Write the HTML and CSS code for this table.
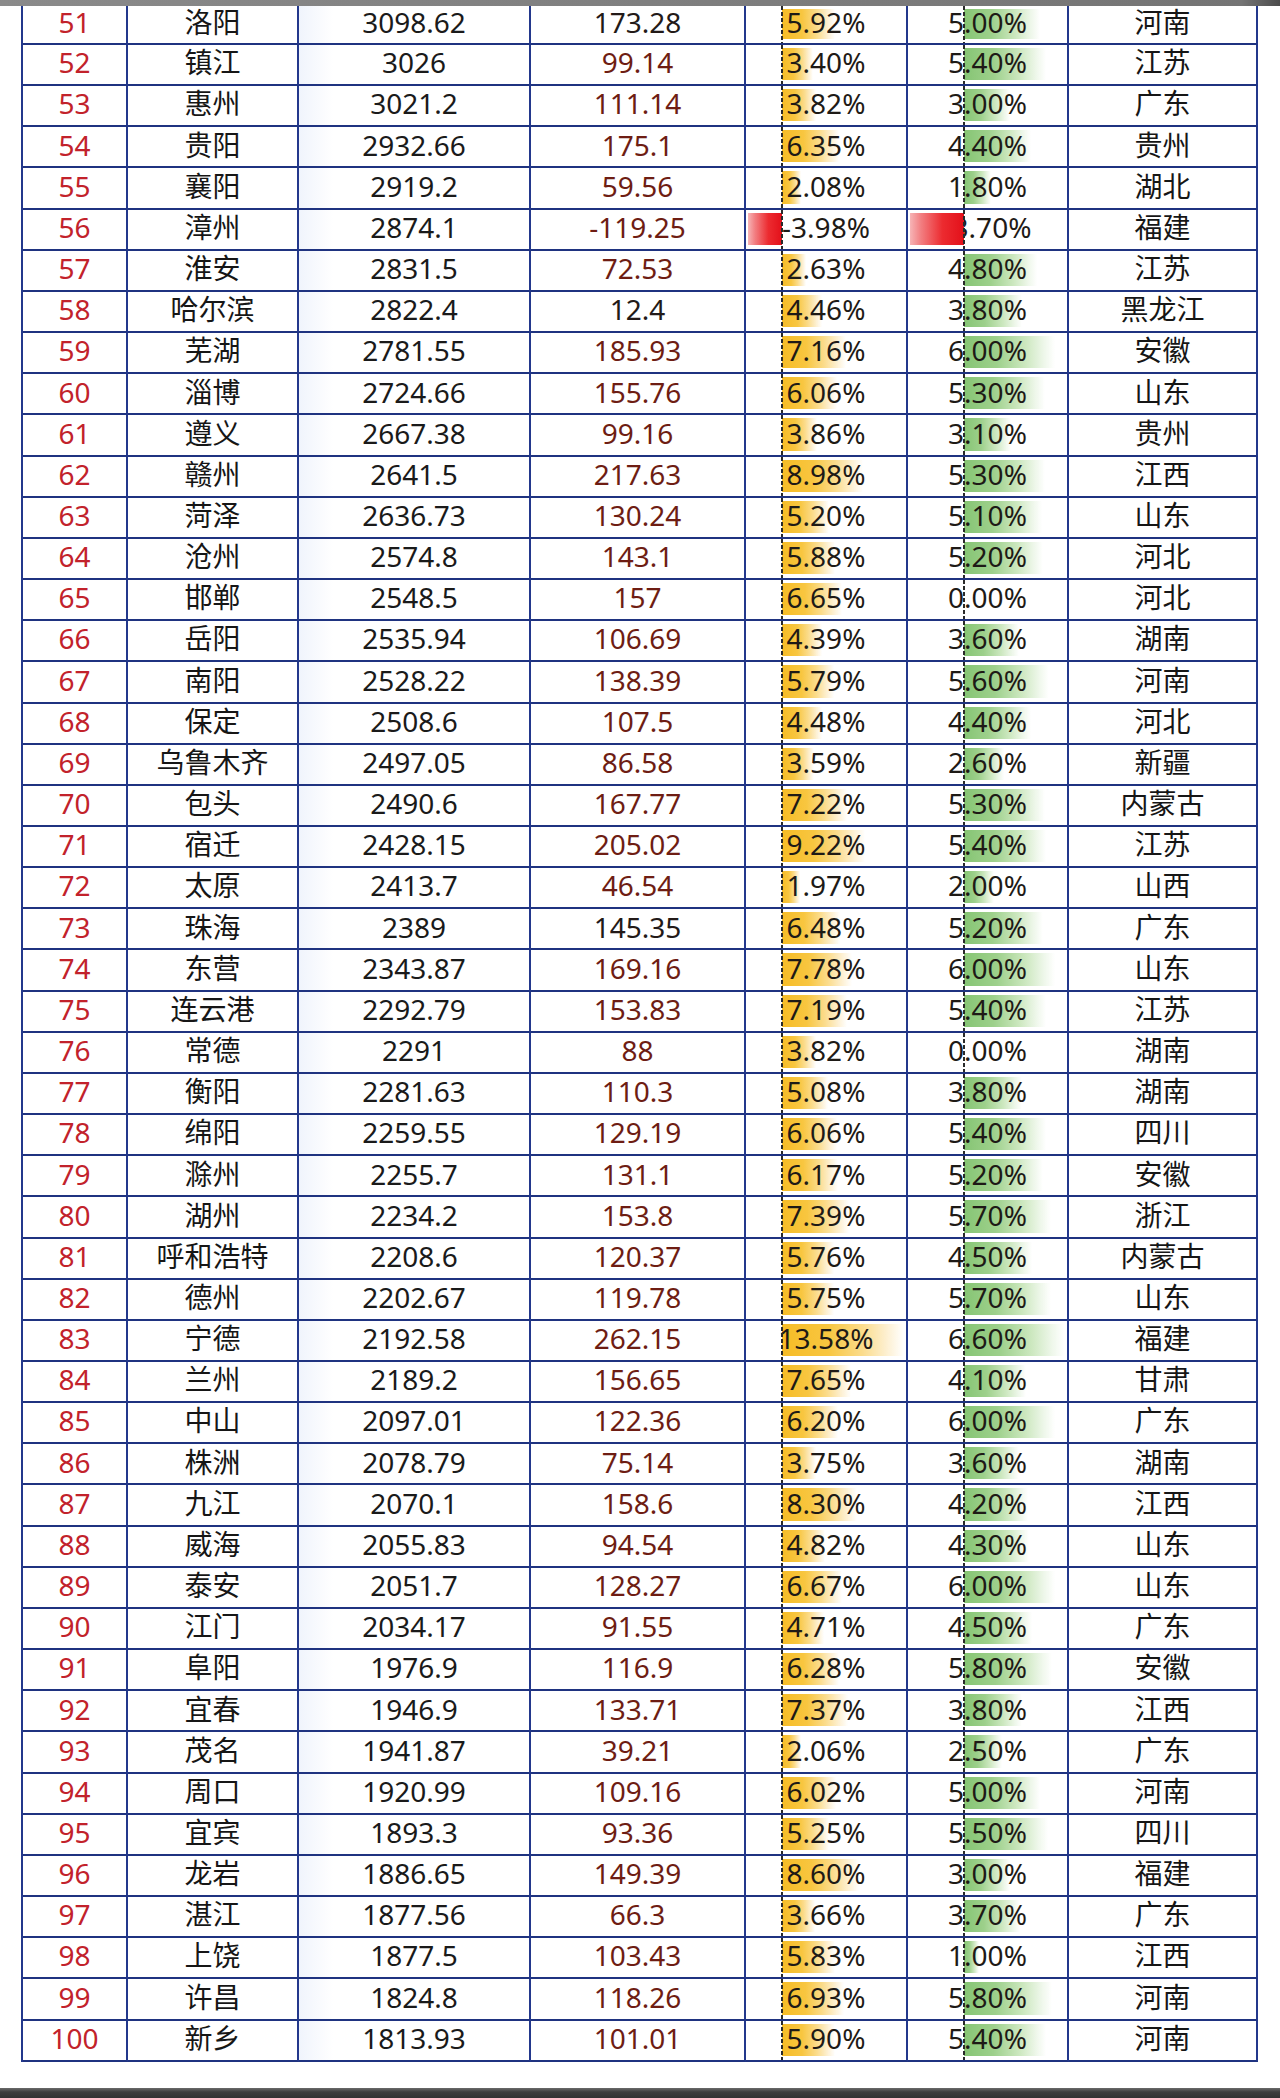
FILE: index.html
```html
<!DOCTYPE html>
<html lang="zh-CN">
<head>
<meta charset="utf-8">
<title>城市GDP排名 51-100</title>
<link rel="stylesheet" href="styles.css">
</head>
<body>
<div class="topbar"></div>
<div class="sheet">
<div class="row"><div class="c idx">51</div><div class="c city">洛阳</div><div class="c gdp">3098.62</div><div class="c inc dark">173.28</div><div class="c pct p5"><span class="bar pos" style="width:53.3px"></span><span class="v">5.92%</span><span class="axis"></span></div><div class="c pct p6"><span class="bar pos" style="width:76px"></span><span class="v">5.00%</span><span class="axis"></span></div><div class="c prov">河南</div></div>
<div class="row"><div class="c idx">52</div><div class="c city">镇江</div><div class="c gdp">3026</div><div class="c inc">99.14</div><div class="c pct p5"><span class="bar pos" style="width:30.6px"></span><span class="v">3.40%</span><span class="axis"></span></div><div class="c pct p6"><span class="bar pos" style="width:82.1px"></span><span class="v">5.40%</span><span class="axis"></span></div><div class="c prov">江苏</div></div>
<div class="row"><div class="c idx">53</div><div class="c city">惠州</div><div class="c gdp">3021.2</div><div class="c inc">111.14</div><div class="c pct p5"><span class="bar pos" style="width:34.4px"></span><span class="v">3.82%</span><span class="axis"></span></div><div class="c pct p6"><span class="bar pos" style="width:45.6px"></span><span class="v">3.00%</span><span class="axis"></span></div><div class="c prov">广东</div></div>
<div class="row"><div class="c idx">54</div><div class="c city">贵阳</div><div class="c gdp">2932.66</div><div class="c inc">175.1</div><div class="c pct p5"><span class="bar pos" style="width:57.2px"></span><span class="v">6.35%</span><span class="axis"></span></div><div class="c pct p6"><span class="bar pos" style="width:66.9px"></span><span class="v">4.40%</span><span class="axis"></span></div><div class="c prov">贵州</div></div>
<div class="row"><div class="c idx">55</div><div class="c city">襄阳</div><div class="c gdp">2919.2</div><div class="c inc">59.56</div><div class="c pct p5"><span class="bar pos" style="width:18.7px"></span><span class="v">2.08%</span><span class="axis"></span></div><div class="c pct p6"><span class="bar pos" style="width:27.4px"></span><span class="v">1.80%</span><span class="axis"></span></div><div class="c prov">湖北</div></div>
<div class="row"><div class="c idx">56</div><div class="c city">漳州</div><div class="c gdp">2874.1</div><div class="c inc">-119.25</div><div class="c pct p5"><span class="bar neg" style="width:34px"></span><span class="v">-3.98%</span><span class="axis"></span></div><div class="c pct p6"><span class="bar neg" style="width:54px"></span><span class="v">-3.70%</span><span class="axis"></span></div><div class="c prov">福建</div></div>
<div class="row"><div class="c idx">57</div><div class="c city">淮安</div><div class="c gdp">2831.5</div><div class="c inc">72.53</div><div class="c pct p5"><span class="bar pos" style="width:23.7px"></span><span class="v">2.63%</span><span class="axis"></span></div><div class="c pct p6"><span class="bar pos" style="width:73px"></span><span class="v">4.80%</span><span class="axis"></span></div><div class="c prov">江苏</div></div>
<div class="row"><div class="c idx">58</div><div class="c city">哈尔滨</div><div class="c gdp">2822.4</div><div class="c inc dark">12.4</div><div class="c pct p5"><span class="bar pos" style="width:40.1px"></span><span class="v">4.46%</span><span class="axis"></span></div><div class="c pct p6"><span class="bar pos" style="width:57.8px"></span><span class="v">3.80%</span><span class="axis"></span></div><div class="c prov">黑龙江</div></div>
<div class="row"><div class="c idx">59</div><div class="c city">芜湖</div><div class="c gdp">2781.55</div><div class="c inc">185.93</div><div class="c pct p5"><span class="bar pos" style="width:64.4px"></span><span class="v">7.16%</span><span class="axis"></span></div><div class="c pct p6"><span class="bar pos" style="width:91.2px"></span><span class="v">6.00%</span><span class="axis"></span></div><div class="c prov">安徽</div></div>
<div class="row"><div class="c idx">60</div><div class="c city">淄博</div><div class="c gdp">2724.66</div><div class="c inc">155.76</div><div class="c pct p5"><span class="bar pos" style="width:54.5px"></span><span class="v">6.06%</span><span class="axis"></span></div><div class="c pct p6"><span class="bar pos" style="width:80.6px"></span><span class="v">5.30%</span><span class="axis"></span></div><div class="c prov">山东</div></div>
<div class="row"><div class="c idx">61</div><div class="c city">遵义</div><div class="c gdp">2667.38</div><div class="c inc">99.16</div><div class="c pct p5"><span class="bar pos" style="width:34.7px"></span><span class="v">3.86%</span><span class="axis"></span></div><div class="c pct p6"><span class="bar pos" style="width:47.1px"></span><span class="v">3.10%</span><span class="axis"></span></div><div class="c prov">贵州</div></div>
<div class="row"><div class="c idx">62</div><div class="c city">赣州</div><div class="c gdp">2641.5</div><div class="c inc">217.63</div><div class="c pct p5"><span class="bar pos" style="width:80.8px"></span><span class="v">8.98%</span><span class="axis"></span></div><div class="c pct p6"><span class="bar pos" style="width:80.6px"></span><span class="v">5.30%</span><span class="axis"></span></div><div class="c prov">江西</div></div>
<div class="row"><div class="c idx">63</div><div class="c city">菏泽</div><div class="c gdp">2636.73</div><div class="c inc">130.24</div><div class="c pct p5"><span class="bar pos" style="width:46.8px"></span><span class="v">5.20%</span><span class="axis"></span></div><div class="c pct p6"><span class="bar pos" style="width:77.5px"></span><span class="v">5.10%</span><span class="axis"></span></div><div class="c prov">山东</div></div>
<div class="row"><div class="c idx">64</div><div class="c city">沧州</div><div class="c gdp">2574.8</div><div class="c inc">143.1</div><div class="c pct p5"><span class="bar pos" style="width:52.9px"></span><span class="v">5.88%</span><span class="axis"></span></div><div class="c pct p6"><span class="bar pos" style="width:79px"></span><span class="v">5.20%</span><span class="axis"></span></div><div class="c prov">河北</div></div>
<div class="row"><div class="c idx">65</div><div class="c city">邯郸</div><div class="c gdp">2548.5</div><div class="c inc">157</div><div class="c pct p5"><span class="bar pos" style="width:59.9px"></span><span class="v">6.65%</span><span class="axis"></span></div><div class="c pct p6"><span class="v">0.00%</span><span class="axis"></span></div><div class="c prov">河北</div></div>
<div class="row"><div class="c idx">66</div><div class="c city">岳阳</div><div class="c gdp">2535.94</div><div class="c inc">106.69</div><div class="c pct p5"><span class="bar pos" style="width:39.5px"></span><span class="v">4.39%</span><span class="axis"></span></div><div class="c pct p6"><span class="bar pos" style="width:54.7px"></span><span class="v">3.60%</span><span class="axis"></span></div><div class="c prov">湖南</div></div>
<div class="row"><div class="c idx">67</div><div class="c city">南阳</div><div class="c gdp">2528.22</div><div class="c inc">138.39</div><div class="c pct p5"><span class="bar pos" style="width:52.1px"></span><span class="v">5.79%</span><span class="axis"></span></div><div class="c pct p6"><span class="bar pos" style="width:85.1px"></span><span class="v">5.60%</span><span class="axis"></span></div><div class="c prov">河南</div></div>
<div class="row"><div class="c idx">68</div><div class="c city">保定</div><div class="c gdp">2508.6</div><div class="c inc">107.5</div><div class="c pct p5"><span class="bar pos" style="width:40.3px"></span><span class="v">4.48%</span><span class="axis"></span></div><div class="c pct p6"><span class="bar pos" style="width:66.9px"></span><span class="v">4.40%</span><span class="axis"></span></div><div class="c prov">河北</div></div>
<div class="row"><div class="c idx">69</div><div class="c city">乌鲁木齐</div><div class="c gdp">2497.05</div><div class="c inc">86.58</div><div class="c pct p5"><span class="bar pos" style="width:32.3px"></span><span class="v">3.59%</span><span class="axis"></span></div><div class="c pct p6"><span class="bar pos" style="width:39.5px"></span><span class="v">2.60%</span><span class="axis"></span></div><div class="c prov">新疆</div></div>
<div class="row"><div class="c idx">70</div><div class="c city">包头</div><div class="c gdp">2490.6</div><div class="c inc">167.77</div><div class="c pct p5"><span class="bar pos" style="width:65px"></span><span class="v">7.22%</span><span class="axis"></span></div><div class="c pct p6"><span class="bar pos" style="width:80.6px"></span><span class="v">5.30%</span><span class="axis"></span></div><div class="c prov">内蒙古</div></div>
<div class="row"><div class="c idx">71</div><div class="c city">宿迁</div><div class="c gdp">2428.15</div><div class="c inc">205.02</div><div class="c pct p5"><span class="bar pos" style="width:83px"></span><span class="v">9.22%</span><span class="axis"></span></div><div class="c pct p6"><span class="bar pos" style="width:82.1px"></span><span class="v">5.40%</span><span class="axis"></span></div><div class="c prov">江苏</div></div>
<div class="row"><div class="c idx">72</div><div class="c city">太原</div><div class="c gdp">2413.7</div><div class="c inc">46.54</div><div class="c pct p5"><span class="bar pos" style="width:17.7px"></span><span class="v">1.97%</span><span class="axis"></span></div><div class="c pct p6"><span class="bar pos" style="width:30.4px"></span><span class="v">2.00%</span><span class="axis"></span></div><div class="c prov">山西</div></div>
<div class="row"><div class="c idx">73</div><div class="c city">珠海</div><div class="c gdp">2389</div><div class="c inc dark">145.35</div><div class="c pct p5"><span class="bar pos" style="width:58.3px"></span><span class="v">6.48%</span><span class="axis"></span></div><div class="c pct p6"><span class="bar pos" style="width:79px"></span><span class="v">5.20%</span><span class="axis"></span></div><div class="c prov">广东</div></div>
<div class="row"><div class="c idx">74</div><div class="c city">东营</div><div class="c gdp">2343.87</div><div class="c inc">169.16</div><div class="c pct p5"><span class="bar pos" style="width:70px"></span><span class="v">7.78%</span><span class="axis"></span></div><div class="c pct p6"><span class="bar pos" style="width:91.2px"></span><span class="v">6.00%</span><span class="axis"></span></div><div class="c prov">山东</div></div>
<div class="row"><div class="c idx">75</div><div class="c city">连云港</div><div class="c gdp">2292.79</div><div class="c inc">153.83</div><div class="c pct p5"><span class="bar pos" style="width:64.7px"></span><span class="v">7.19%</span><span class="axis"></span></div><div class="c pct p6"><span class="bar pos" style="width:82.1px"></span><span class="v">5.40%</span><span class="axis"></span></div><div class="c prov">江苏</div></div>
<div class="row"><div class="c idx">76</div><div class="c city">常德</div><div class="c gdp">2291</div><div class="c inc">88</div><div class="c pct p5"><span class="bar pos" style="width:34.4px"></span><span class="v">3.82%</span><span class="axis"></span></div><div class="c pct p6"><span class="v">0.00%</span><span class="axis"></span></div><div class="c prov">湖南</div></div>
<div class="row"><div class="c idx">77</div><div class="c city">衡阳</div><div class="c gdp">2281.63</div><div class="c inc">110.3</div><div class="c pct p5"><span class="bar pos" style="width:45.7px"></span><span class="v">5.08%</span><span class="axis"></span></div><div class="c pct p6"><span class="bar pos" style="width:57.8px"></span><span class="v">3.80%</span><span class="axis"></span></div><div class="c prov">湖南</div></div>
<div class="row"><div class="c idx">78</div><div class="c city">绵阳</div><div class="c gdp">2259.55</div><div class="c inc">129.19</div><div class="c pct p5"><span class="bar pos" style="width:54.5px"></span><span class="v">6.06%</span><span class="axis"></span></div><div class="c pct p6"><span class="bar pos" style="width:82.1px"></span><span class="v">5.40%</span><span class="axis"></span></div><div class="c prov">四川</div></div>
<div class="row"><div class="c idx">79</div><div class="c city">滁州</div><div class="c gdp">2255.7</div><div class="c inc">131.1</div><div class="c pct p5"><span class="bar pos" style="width:55.5px"></span><span class="v">6.17%</span><span class="axis"></span></div><div class="c pct p6"><span class="bar pos" style="width:79px"></span><span class="v">5.20%</span><span class="axis"></span></div><div class="c prov">安徽</div></div>
<div class="row"><div class="c idx">80</div><div class="c city">湖州</div><div class="c gdp">2234.2</div><div class="c inc">153.8</div><div class="c pct p5"><span class="bar pos" style="width:66.5px"></span><span class="v">7.39%</span><span class="axis"></span></div><div class="c pct p6"><span class="bar pos" style="width:86.6px"></span><span class="v">5.70%</span><span class="axis"></span></div><div class="c prov">浙江</div></div>
<div class="row"><div class="c idx">81</div><div class="c city">呼和浩特</div><div class="c gdp">2208.6</div><div class="c inc">120.37</div><div class="c pct p5"><span class="bar pos" style="width:51.8px"></span><span class="v">5.76%</span><span class="axis"></span></div><div class="c pct p6"><span class="bar pos" style="width:68.4px"></span><span class="v">4.50%</span><span class="axis"></span></div><div class="c prov">内蒙古</div></div>
<div class="row"><div class="c idx">82</div><div class="c city">德州</div><div class="c gdp">2202.67</div><div class="c inc">119.78</div><div class="c pct p5"><span class="bar pos" style="width:51.8px"></span><span class="v">5.75%</span><span class="axis"></span></div><div class="c pct p6"><span class="bar pos" style="width:86.6px"></span><span class="v">5.70%</span><span class="axis"></span></div><div class="c prov">山东</div></div>
<div class="row"><div class="c idx">83</div><div class="c city">宁德</div><div class="c gdp">2192.58</div><div class="c inc">262.15</div><div class="c pct p5"><span class="bar pos" style="width:122.2px"></span><span class="v">13.58%</span><span class="axis"></span></div><div class="c pct p6"><span class="bar pos" style="width:100.3px"></span><span class="v">6.60%</span><span class="axis"></span></div><div class="c prov">福建</div></div>
<div class="row"><div class="c idx">84</div><div class="c city">兰州</div><div class="c gdp">2189.2</div><div class="c inc">156.65</div><div class="c pct p5"><span class="bar pos" style="width:68.9px"></span><span class="v">7.65%</span><span class="axis"></span></div><div class="c pct p6"><span class="bar pos" style="width:62.3px"></span><span class="v">4.10%</span><span class="axis"></span></div><div class="c prov">甘肃</div></div>
<div class="row"><div class="c idx">85</div><div class="c city">中山</div><div class="c gdp">2097.01</div><div class="c inc">122.36</div><div class="c pct p5"><span class="bar pos" style="width:55.8px"></span><span class="v">6.20%</span><span class="axis"></span></div><div class="c pct p6"><span class="bar pos" style="width:91.2px"></span><span class="v">6.00%</span><span class="axis"></span></div><div class="c prov">广东</div></div>
<div class="row"><div class="c idx">86</div><div class="c city">株洲</div><div class="c gdp">2078.79</div><div class="c inc">75.14</div><div class="c pct p5"><span class="bar pos" style="width:33.8px"></span><span class="v">3.75%</span><span class="axis"></span></div><div class="c pct p6"><span class="bar pos" style="width:54.7px"></span><span class="v">3.60%</span><span class="axis"></span></div><div class="c prov">湖南</div></div>
<div class="row"><div class="c idx">87</div><div class="c city">九江</div><div class="c gdp">2070.1</div><div class="c inc">158.6</div><div class="c pct p5"><span class="bar pos" style="width:74.7px"></span><span class="v">8.30%</span><span class="axis"></span></div><div class="c pct p6"><span class="bar pos" style="width:63.8px"></span><span class="v">4.20%</span><span class="axis"></span></div><div class="c prov">江西</div></div>
<div class="row"><div class="c idx">88</div><div class="c city">威海</div><div class="c gdp">2055.83</div><div class="c inc">94.54</div><div class="c pct p5"><span class="bar pos" style="width:43.4px"></span><span class="v">4.82%</span><span class="axis"></span></div><div class="c pct p6"><span class="bar pos" style="width:65.4px"></span><span class="v">4.30%</span><span class="axis"></span></div><div class="c prov">山东</div></div>
<div class="row"><div class="c idx">89</div><div class="c city">泰安</div><div class="c gdp">2051.7</div><div class="c inc">128.27</div><div class="c pct p5"><span class="bar pos" style="width:60px"></span><span class="v">6.67%</span><span class="axis"></span></div><div class="c pct p6"><span class="bar pos" style="width:91.2px"></span><span class="v">6.00%</span><span class="axis"></span></div><div class="c prov">山东</div></div>
<div class="row"><div class="c idx">90</div><div class="c city">江门</div><div class="c gdp">2034.17</div><div class="c inc">91.55</div><div class="c pct p5"><span class="bar pos" style="width:42.4px"></span><span class="v">4.71%</span><span class="axis"></span></div><div class="c pct p6"><span class="bar pos" style="width:68.4px"></span><span class="v">4.50%</span><span class="axis"></span></div><div class="c prov">广东</div></div>
<div class="row"><div class="c idx">91</div><div class="c city">阜阳</div><div class="c gdp">1976.9</div><div class="c inc">116.9</div><div class="c pct p5"><span class="bar pos" style="width:56.5px"></span><span class="v">6.28%</span><span class="axis"></span></div><div class="c pct p6"><span class="bar pos" style="width:88.2px"></span><span class="v">5.80%</span><span class="axis"></span></div><div class="c prov">安徽</div></div>
<div class="row"><div class="c idx">92</div><div class="c city">宜春</div><div class="c gdp">1946.9</div><div class="c inc">133.71</div><div class="c pct p5"><span class="bar pos" style="width:66.3px"></span><span class="v">7.37%</span><span class="axis"></span></div><div class="c pct p6"><span class="bar pos" style="width:57.8px"></span><span class="v">3.80%</span><span class="axis"></span></div><div class="c prov">江西</div></div>
<div class="row"><div class="c idx">93</div><div class="c city">茂名</div><div class="c gdp">1941.87</div><div class="c inc">39.21</div><div class="c pct p5"><span class="bar pos" style="width:18.5px"></span><span class="v">2.06%</span><span class="axis"></span></div><div class="c pct p6"><span class="bar pos" style="width:38px"></span><span class="v">2.50%</span><span class="axis"></span></div><div class="c prov">广东</div></div>
<div class="row"><div class="c idx">94</div><div class="c city">周口</div><div class="c gdp">1920.99</div><div class="c inc">109.16</div><div class="c pct p5"><span class="bar pos" style="width:54.2px"></span><span class="v">6.02%</span><span class="axis"></span></div><div class="c pct p6"><span class="bar pos" style="width:76px"></span><span class="v">5.00%</span><span class="axis"></span></div><div class="c prov">河南</div></div>
<div class="row"><div class="c idx">95</div><div class="c city">宜宾</div><div class="c gdp">1893.3</div><div class="c inc">93.36</div><div class="c pct p5"><span class="bar pos" style="width:47.3px"></span><span class="v">5.25%</span><span class="axis"></span></div><div class="c pct p6"><span class="bar pos" style="width:83.6px"></span><span class="v">5.50%</span><span class="axis"></span></div><div class="c prov">四川</div></div>
<div class="row"><div class="c idx">96</div><div class="c city">龙岩</div><div class="c gdp">1886.65</div><div class="c inc">149.39</div><div class="c pct p5"><span class="bar pos" style="width:77.4px"></span><span class="v">8.60%</span><span class="axis"></span></div><div class="c pct p6"><span class="bar pos" style="width:45.6px"></span><span class="v">3.00%</span><span class="axis"></span></div><div class="c prov">福建</div></div>
<div class="row"><div class="c idx">97</div><div class="c city">湛江</div><div class="c gdp">1877.56</div><div class="c inc">66.3</div><div class="c pct p5"><span class="bar pos" style="width:32.9px"></span><span class="v">3.66%</span><span class="axis"></span></div><div class="c pct p6"><span class="bar pos" style="width:56.2px"></span><span class="v">3.70%</span><span class="axis"></span></div><div class="c prov">广东</div></div>
<div class="row"><div class="c idx">98</div><div class="c city">上饶</div><div class="c gdp">1877.5</div><div class="c inc">103.43</div><div class="c pct p5"><span class="bar pos" style="width:52.5px"></span><span class="v">5.83%</span><span class="axis"></span></div><div class="c pct p6"><span class="bar pos" style="width:15.2px"></span><span class="v">1.00%</span><span class="axis"></span></div><div class="c prov">江西</div></div>
<div class="row"><div class="c idx">99</div><div class="c city">许昌</div><div class="c gdp">1824.8</div><div class="c inc">118.26</div><div class="c pct p5"><span class="bar pos" style="width:62.4px"></span><span class="v">6.93%</span><span class="axis"></span></div><div class="c pct p6"><span class="bar pos" style="width:88.2px"></span><span class="v">5.80%</span><span class="axis"></span></div><div class="c prov">河南</div></div>
<div class="row"><div class="c idx">100</div><div class="c city">新乡</div><div class="c gdp">1813.93</div><div class="c inc">101.01</div><div class="c pct p5"><span class="bar pos" style="width:53.1px"></span><span class="v">5.90%</span><span class="axis"></span></div><div class="c pct p6"><span class="bar pos" style="width:82.1px"></span><span class="v">5.40%</span><span class="axis"></span></div><div class="c prov">河南</div></div>
</div>
<div class="spacer"></div>
<div class="bottombar"></div>
</body>
</html>
```

FILE: styles.css
```css
html, body {
  margin: 0;
  padding: 0;
}

body {
  width: 1280px;
  height: 2098px;
  overflow: hidden;
  background: #ffffff;
  display: flex;
  flex-direction: column;
  font-family: "Noto Sans", "Noto Sans CJK SC", sans-serif;
  font-size: 28px;
  color: #1b1b1b;
}

.topbar {
  flex: none;
  height: 6px;
  background: linear-gradient(90deg, #8a8a8a 0%, #7d7d7d 60%, #747474 97%, #4c4c4c 100%);
}

.sheet {
  flex: none;
  margin-left: 21px;
  width: 1237px;
  box-sizing: border-box;
  border-left: 2px solid #23388c;
  display: grid;
  grid-template-columns: 105px 171px 232px 215px 162px 161px 189px;
  grid-template-rows: 39px;
  grid-auto-rows: 41.16px;
}

.row {
  display: contents;
}

.c {
  position: relative;
  box-sizing: border-box;
  border-right: 2px solid #23388c;
  border-bottom: 2px solid #1f3380;
  display: flex;
  align-items: center;
  justify-content: center;
  padding-bottom: 3px;
  line-height: 1.2;
  white-space: nowrap;
}

.idx {
  color: #c2222b;
}

.city,
.prov {
  color: #161616;
}

.gdp {
  color: #1a1a1a;
  background: linear-gradient(90deg, #f0f4fc 0px, #ffffff 34px);
}

.inc {
  color: #6e1d13;
}

.inc.dark {
  color: #231a18;
}

.pct .v {
  position: relative;
  z-index: 1;
  color: #1e1a16;
}

.bar {
  position: absolute;
  top: 3px;
  bottom: 4px;
  filter: blur(0.7px);
}

.p5 .bar.pos {
  left: 36px;
  background: linear-gradient(90deg, #f6bc26 0%, #f8c640 38%, #fbdc8c 66%, #fdf0d2 86%, rgba(255, 255, 255, 0) 100%);
}

.p6 .bar.pos {
  left: 56px;
  background: linear-gradient(90deg, #86c574 0%, #9dd08b 36%, #cde8c0 68%, #eef7ea 88%, rgba(255, 255, 255, 0) 100%);
}

.bar.neg {
  z-index: 2;
  background: linear-gradient(270deg, #e3101a 0%, #ec2b30 40%, #f27f82 80%, #f6b4b6 100%);
}

.p5 .bar.neg {
  right: calc(100% - 36px);
}

.p6 .bar.neg {
  right: calc(100% - 56px);
}

.axis {
  position: absolute;
  top: 0;
  bottom: 0;
  width: 2px;
  z-index: 3;
  background: repeating-linear-gradient(180deg, #2a2a2a 0px, #2a2a2a 4px, transparent 4px, transparent 6px);
}

.p5 .axis {
  left: 35px;
}

.p6 .axis {
  left: 55px;
}

.spacer {
  flex: 1;
}

.bottombar {
  flex: none;
  height: 10px;
  background: linear-gradient(180deg, #6a6a6a 0%, #3e3e3e 40%, #333333 100%);
}
```
